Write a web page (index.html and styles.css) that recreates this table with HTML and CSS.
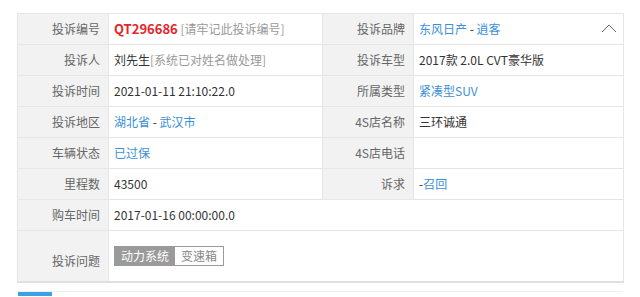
FILE: index.html
```html
<!DOCTYPE html>
<html>
<head>
<meta charset="utf-8">
<link rel="stylesheet" href="styles.css">
</head>
<body>
<div class="wrap">
  <table class="info">
    <colgroup>
      <col class="c-lab"><col class="c-val1"><col class="c-lab"><col class="c-val2">
    </colgroup>
    <tr>
      <th>投诉编号</th>
      <td><span class="code">QT296686</span> <span class="hint">[请牢记此投诉编号]</span></td>
      <th>投诉品牌</th>
      <td class="rel"><a class="lnk">东风日产</a> - <a class="lnk">逍客</a>
        <svg class="caret" width="16" height="10" viewBox="0 0 16 10"><polyline points="1,9 8,2 15,9" fill="none" stroke="#666" stroke-width="1"/></svg>
      </td>
    </tr>
    <tr>
      <th>投诉人</th>
      <td>刘先生<span class="hint">[系统已对姓名做处理]</span></td>
      <th>投诉车型</th>
      <td>2017款 2.0L CVT豪华版</td>
    </tr>
    <tr>
      <th>投诉时间</th>
      <td>2021-01-11 21:10:22.0</td>
      <th>所属类型</th>
      <td><a class="lnk">紧凑型SUV</a></td>
    </tr>
    <tr>
      <th>投诉地区</th>
      <td><a class="lnk">湖北省</a> - <a class="lnk">武汉市</a></td>
      <th>4S店名称</th>
      <td>三环诚通</td>
    </tr>
    <tr>
      <th>车辆状态</th>
      <td><a class="lnk">已过保</a></td>
      <th>4S店电话</th>
      <td></td>
    </tr>
    <tr>
      <th>里程数</th>
      <td>43500</td>
      <th>诉求</th>
      <td>-<a class="lnk">召回</a></td>
    </tr>
    <tr>
      <th>购车时间</th>
      <td colspan="3">2017-01-16 00:00:00.0</td>
    </tr>
    <tr class="tall">
      <th>投诉问题</th>
      <td colspan="3"><span class="tags"><span class="tag on">动力系统</span><span class="tag">变速箱</span></span></td>
    </tr>
  </table>
  <div class="tabs"><span class="tab-act"></span></div>
</div>
</body>
</html>
```
FILE: styles.css
```css
html, body {
  margin: 0;
  padding: 0;
  background: #fff;
  font-family: "Noto Sans CJK SC", "Noto Sans", sans-serif;
  font-size: 12px;
  color: #333;
}
.wrap {
  padding: 13px 0 0 17px;
  width: 606px;
}
.info {
  border-collapse: collapse;
  width: 606px;
  table-layout: fixed;
  border: 1px solid #e3e3e3;
  border-bottom: 2px solid #e0e0e0;
}
.c-lab { width: 91px; }
.c-val1 { width: 214px; }
.c-val2 { width: 210px; }
.info th, .info td {
  border: 1px solid #e6e6e6;
  height: 30px;
  padding: 0;
  line-height: 16px;
  white-space: nowrap;
}
.info th {
  background: #f2f2f2;
  color: #666;
  font-weight: normal;
  text-align: right;
  padding-right: 8px;
}
.info td {
  padding-left: 5px;
  text-align: left;
}
.info tr.tall th {
  height: 40px;
  padding-top: 10px;
}
.info tr.tall td {
  height: 50px;
}
.rel { position: relative; }
.caret {
  position: absolute;
  right: 6px;
  top: 9px;
}
.code {
  color: #e4252a;
  font-weight: bold;
  font-size: 13px;
}
.hint { color: #999; }
.lnk { color: #3c8fd6; }
.tags {
  display: inline-flex;
  vertical-align: middle;
  border: 1px solid #9a9a9a;
}
.tag {
  padding: 1px 6px;
  line-height: 16px;
  color: #888;
  background: #fff;
}
.tag.on {
  background: #9a9a9a;
  color: #fff;
}
.tabs {
  margin-top: 8px;
  border-top: 1px solid #eee;
  height: 4px;
}
.tab-act {
  display: block;
  width: 34px;
  height: 5px;
  margin-left: 1px;
  background: #3aa0e8;
}
```
